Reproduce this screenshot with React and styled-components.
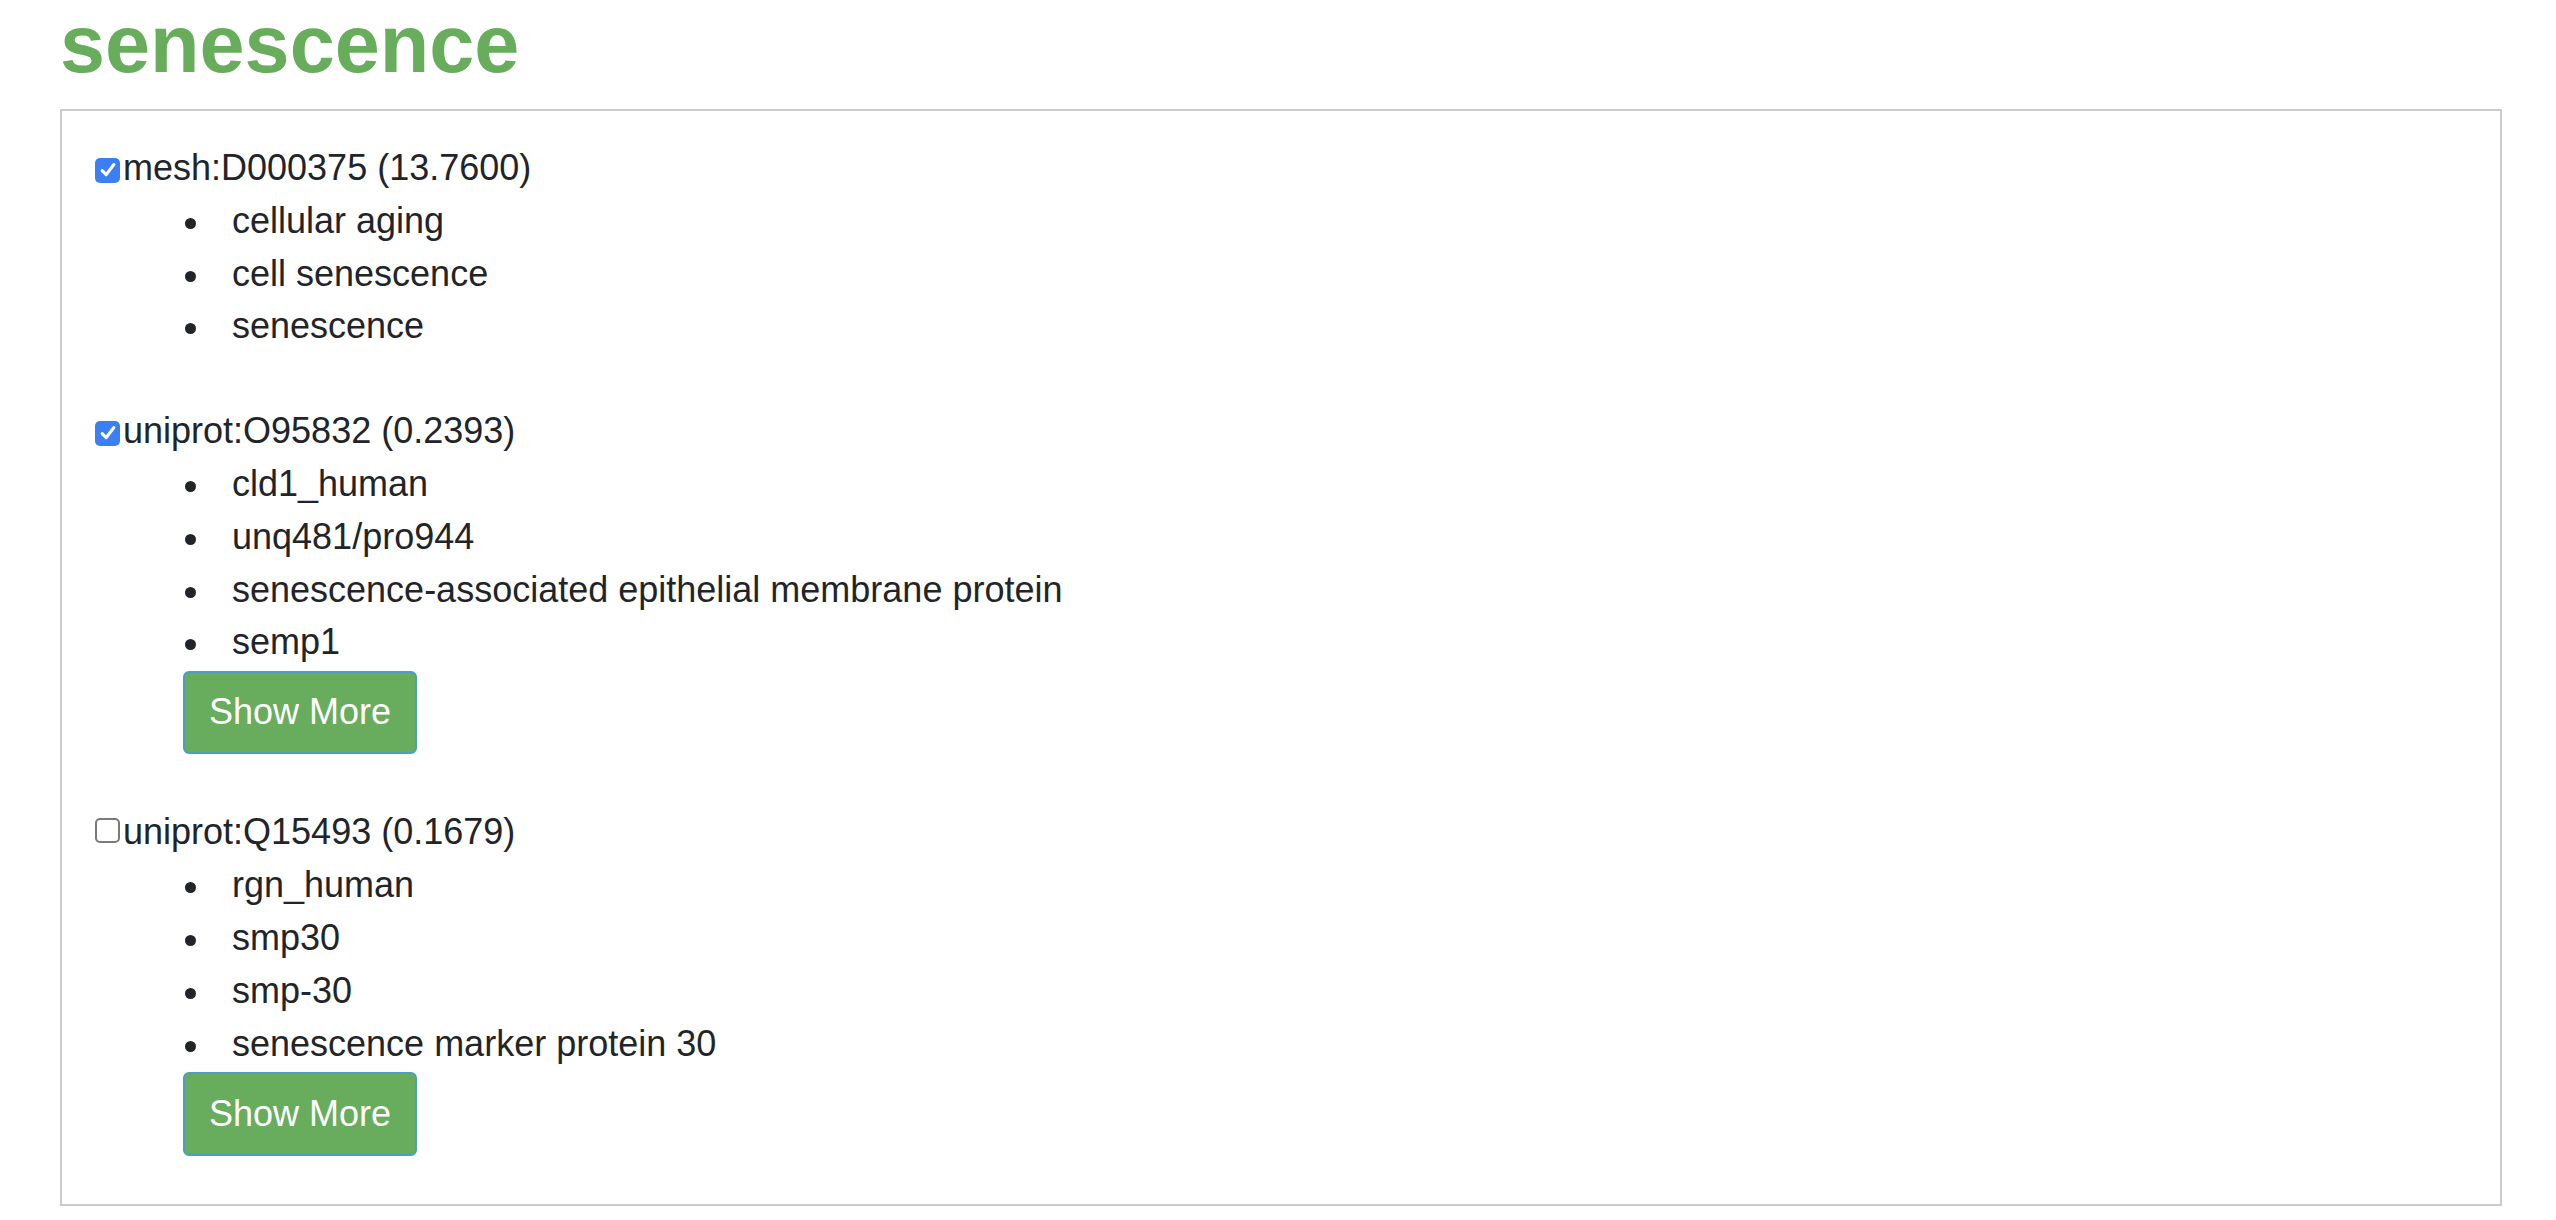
import React, { useState } from 'react'
import styled, { createGlobalStyle } from 'styled-components'

const GlobalStyle = createGlobalStyle`
  html, body {
    margin: 0;
    padding: 0;
    background: #ffffff;
  }
  body {
    font-family: "Liberation Sans", Arial, Helvetica, sans-serif;
    color: #212529;
  }
`

const groups = [
  {
    id: 'mesh:D000375',
    score: '13.7600',
    checked: true,
    names: ['cellular aging', 'cell senescence', 'senescence'],
    more: false,
  },
  {
    id: 'uniprot:O95832',
    score: '0.2393',
    checked: true,
    names: ['cld1_human', 'unq481/pro944', 'senescence-associated epithelial membrane protein', 'semp1'],
    more: true,
  },
  {
    id: 'uniprot:Q15493',
    score: '0.1679',
    checked: false,
    names: ['rgn_human', 'smp30', 'smp-30', 'senescence marker protein 30'],
    more: true,
  },
]

const CheckBox = ({ checked, onClick }) => (
  <Box $checked={checked} onClick={onClick}>
    {checked && (
      <svg width="18" height="18" viewBox="0 0 18 18">
        <path d="M3.2 9.6 L7.2 13.6 L14.8 3.6" fill="none" stroke="#ffffff" strokeWidth="3.2" strokeLinecap="round" strokeLinejoin="round" />
      </svg>
    )}
  </Box>
)

const Group = ({ group }) => {
  const [checked, setChecked] = useState(group.checked)
  return (
    <GroupWrapper>
      <Label>
        <CheckBox checked={checked} onClick={() => setChecked(!checked)} />
        {group.id} ({group.score})
      </Label>
      <NameList>
        {group.names.map((name) => (
          <Name key={name}>{name}</Name>
        ))}
        {group.more && <MoreButton type="button">Show More</MoreButton>}
      </NameList>
    </GroupWrapper>
  )
}

export default function App() {
  return (
    <Page>
      <GlobalStyle />
      <Title>senescence</Title>
      <Panel>
        {groups.map((g) => (
          <Group key={g.id} group={g} />
        ))}
      </Panel>
    </Page>
  )
}

const Page = styled.div`
  padding: 0 54px 0 60px;
`

const Title = styled.h1`
  margin: 4px 0 25px;
  font-size: 81px;
  line-height: 80px;
  font-weight: 700;
  color: #67ad5b;
`

const Panel = styled.div`
  border: 2px solid #cccccc;
  padding: 31px 33px 0;
`

const GroupWrapper = styled.div`
  margin-bottom: 52px;
  &:last-child {
    margin-bottom: 48px;
  }
`

const Label = styled.div`
  font-size: 36px;
  line-height: 52.8px;
  color: #212529;
`

const Box = styled.span`
  display: inline-flex;
  align-items: center;
  justify-content: center;
  box-sizing: border-box;
  width: 25px;
  height: 25px;
  margin-right: 3px;
  vertical-align: 1px;
  border-radius: 5px;
  cursor: pointer;
  background: ${(p) => (p.$checked ? '#3b7ff5' : '#ffffff')};
  border: ${(p) => (p.$checked ? '0' : '2px solid #7a7a7a')};
`

const NameList = styled.ul`
  margin: 0;
  padding: 0 0 0 88px;
  list-style: none;
`

const Name = styled.li`
  font-size: 36px;
  line-height: 52.8px;
  color: #212529;
  &::before {
    content: '';
    display: inline-block;
    width: 11px;
    height: 11px;
    margin: 0 36px 0 2px;
    border-radius: 50%;
    background: #212529;
    vertical-align: middle;
  }
`

const MoreButton = styled.button`
  display: inline-block;
  margin-top: 2px;
  padding: 13.2px 24px;
  font-family: inherit;
  font-size: 36px;
  line-height: 52.8px;
  color: #ffffff;
  background: #68ad5d;
  border: 2.2px solid #4b9fbf;
  border-radius: 6px;
  cursor: pointer;
`
